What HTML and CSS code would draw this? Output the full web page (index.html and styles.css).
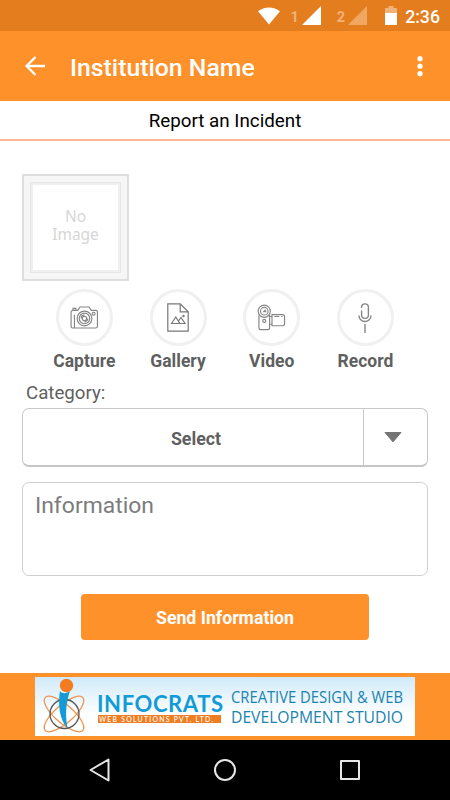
FILE: index.html
```html
<!DOCTYPE html>
<html lang="en">
<head>
<meta charset="utf-8">
<title>Report an Incident</title>
<link rel="stylesheet" href="styles.css">
</head>
<body>
<div class="screen">
  <div class="status">
    <svg class="wifi" width="22" height="18" viewBox="0 0 22 18"><path d="M0 4.2C6.2-.9 15.8-.9 22 4.2L11 17.6Z" fill="#fff"/></svg>
    <span class="sim sim1">1</span>
    <svg class="signal" width="19" height="19" viewBox="0 0 19 19"><path d="M19 0V19H0Z" fill="#fff"/></svg>
    <span class="sim sim2">2</span>
    <svg class="signal" width="19" height="19" viewBox="0 0 19 19"><path d="M19 0V19H0Z" fill="#efa762"/></svg>
    <svg class="battery" width="12" height="19" viewBox="0 0 12 19"><path d="M3.5 0h5v2H12v5H0V2h3.5Z" fill="#f1b27a"/><path d="M0 7H12V19H0Z" fill="#fff"/></svg>
    <span class="time">2:36</span>
  </div>
  <header class="appbar">
    <svg class="back" width="20" height="20" viewBox="0 0 20 20" fill="none" stroke="#fff" stroke-width="2.3"><path d="M20 10H2M10.5 1 1.6 10l8.9 9"/></svg>
    <h1>Institution Name</h1>
    <svg width="6" height="20" viewBox="0 0 6 20" fill="#fff"><circle cx="3" cy="2.7" r="2.6"/><circle cx="3" cy="10.2" r="2.6"/><circle cx="3" cy="17.7" r="2.6"/></svg>
  </header>
  <div class="subtitle"><span>Report an Incident</span></div>
  <main>
    <div class="photo"><div class="frame"><span>No</span><span>Image</span></div></div>
    <div class="actions">
      <div class="action"><div class="ring">
        <svg width="29" height="23" viewBox="0 0 30 24" fill="none" stroke="#858585" stroke-width="1.2"><path d="M3 4.5h5L10.3 1h9.4L22 4.5h4.5a2 2 0 0 1 2 2V21a2 2 0 0 1-2 2H3a2 2 0 0 1-2-2V6.500a2 2 0 0 1 2-2ZM3 4.500V2.500h3v2M4.500 9v14"/><circle cx="15" cy="13" r="7.700"/><circle cx="15" cy="13" r="5.500"/><circle cx="15" cy="13" r="2.300"/><path d="M11.500 13a3.500 3.500 0 0 1 3.500-3.500M18.500 13a3.500 3.500 0 0 1-3.500 3.500"/><circle cx="24.500" cy="8" r="1.500"/></svg>
      </div><span>Capture</span></div>
      <div class="action"><div class="ring">
        <svg width="22" height="29" viewBox="0 0 22 29" fill="none" stroke="#777" stroke-width="1.200"><path d="M.8.8h12.400l8 8v19.400H.8ZM13.200.8v8h8M4.500 20.500l4.300-6.500 4 6.500ZM11.500 18l2.500-3.500 4 6h-5"/><circle cx="16.500" cy="13" r=".6"/></svg>
      </div><span>Gallery</span></div>
      <div class="action"><div class="ring">
        <svg width="29" height="27" viewBox="0 0 30 27" fill="none" stroke="#858585" stroke-width="1.200"><circle cx="7.500" cy="7" r="6.300"/><circle cx="7.500" cy="7" r="3.900"/><path d="M2 11.500V24a2 2 0 0 0 2 2h7a2 2 0 0 0 2-2V11M9 5.500 7 7.500h2.500M13 12.500h2.500v8H13M15.500 10.500h11a2 2 0 0 1 2 2V20a2 2 0 0 1-2 2h-11ZM18 12.500h5M25 12.500h1.500"/><circle cx="7.500" cy="17" r="1.500"/></svg>
      </div><span>Video</span></div>
      <div class="action"><div class="ring">
        <svg width="14" height="30" viewBox="0 0 14 30" fill="none" stroke="#858585" stroke-width="1.400"><path d="M3.600 5V4.300a3.400 3.400 0 0 1 6.800 0V12a3.400 3.400 0 0 1-6.800 0V7.500M1 12.500a6 6 0 0 0 12 0M7 21v9"/></svg>
      </div><span>Record</span></div>
    </div>
    <div class="label">Category:</div>
    <div class="select">
      <div class="value">Select</div>
      <div class="arrow"><svg width="18" height="11" viewBox="0 0 18 11"><path d="M1 .5H17L9 9.900Z" fill="#757575" stroke="#757575" stroke-linejoin="round"/></svg></div>
    </div>
    <div class="info">Information</div>
    <button class="send">Send Information</button>
  </main>
  <footer class="ad">
    <div class="banner">
      <svg class="atom" width="44" height="55" viewBox="0 0 44 55" fill="none">
        <g stroke="#ed9350" stroke-width="1.300"><ellipse cx="21" cy="36" rx="25" ry="9" transform="rotate(41 21 36)"/><ellipse cx="21" cy="36" rx="25" ry="9" transform="rotate(-41 21 36)"/></g>
        <circle cx="21.500" cy="36" r="14.500" stroke="#555" stroke-width="1.300"/>
        <path d="M17 13c2 3 7 3 10-.5C24 22 21.500 34 24.500 50 17 43 14.500 27 17 13Z" fill="#139bd7"/>
        <circle cx="23.500" cy="7.500" r="6.700" fill="#f47c20"/>
      </svg>
      <svg class="brand" width="126" height="40" viewBox="0 0 126 40">
        <text class="name" x="0" y="19.500" textLength="126">INFOCRATS</text>
        <path d="M1 23H124V31H1Z" fill="#ef7d22"/>
        <text class="tag" x="2" y="29.500" textLength="114">WEB SOLUTIONS PVT. LTD.</text>
      </svg>
      <svg class="slogan" width="174" height="45" viewBox="0 0 174 45">
        <text x="0" y="14.700" textLength="172" lengthAdjust="spacingAndGlyphs">CREATIVE DESIGN &amp; WEB</text>
        <text x="0" y="35" textLength="172" lengthAdjust="spacingAndGlyphs">DEVELOPMENT STUDIO</text>
      </svg>
    </div>
  </footer>
  <nav class="nav">
    <svg width="22" height="24" viewBox="0 0 22 24"><path d="M19.500 1.500v21L1.500 12Z"/></svg>
    <svg width="22" height="22" viewBox="0 0 22 22"><circle cx="11" cy="11" r="10"/></svg>
    <svg width="20" height="20" viewBox="0 0 20 20"><path d="M1 1h18v18H1Z"/></svg>
  </nav>
</div>
</body>
</html>
```
FILE: styles.css
```css
* { box-sizing: border-box; }
body { margin: 0; background: #fff; font-family: Roboto, "Liberation Sans", sans-serif; }
svg { display: block; flex: none; overflow: visible; }
.screen { width: 450px; height: 800px; display: flex; flex-direction: column; overflow: hidden; }

.status { height: 31px; background: #e37d1e; display: flex; align-items: flex-start; padding: 6px 10px 0 258px; color: #fff; }
.wifi { margin-top: 1px; }
.sim { width: 10px; font-size: 14.5px; line-height: 17px; padding-top: 3px; font-weight: 700; color: #f1b27a; }
.sim1 { margin-left: 10.500px; margin-right: 1.500px; }
.sim2 { margin-left: 16px; margin-right: 1px; }
.battery { margin-left: 18px; }
.time { margin-left: 8.500px; font-size: 17.700px; line-height: 22px; font-weight: 500; white-space: nowrap; }

.appbar { height: 70px; background: #ff912b; display: flex; align-items: center; padding: 0 27px 0 25px; color: #fff; }
.appbar h1 { flex: 1; margin: 3px 0 0 25px; font-size: 24.800px; line-height: 30px; font-weight: 500; }

.subtitle { height: 40px; border-bottom: 2px solid #ffb892; text-align: center; color: #000; font-size: 18.800px; line-height: 40px; }

main { height: 532px; padding: 33px 22px 0; color: #5f5f5f; }
.photo { width: 107px; height: 107px; padding: 6px; border: 2px solid #dedede; background: #f6f6f6; }
.frame { height: 91px; border: 3px solid #f0f0f0; outline: 1px solid #e6e6e6; outline-offset: -1px; background: #fff; display: flex; flex-direction: column; align-items: center; justify-content: center; padding-bottom: 6px; font: 15.500px/18px "Noto Sans", sans-serif; color: #d6d6d6; }
.actions { display: grid; grid-template-columns: repeat(4, 93.700px); margin: 8px 0 0 15.500px; }
.action { display: flex; flex-direction: column; align-items: center; font-size: 17.500px; line-height: 22px; font-weight: 700; }
.ring { width: 57px; height: 57px; border: 3px solid #f0f0f0; border-radius: 50%; display: flex; align-items: center; justify-content: center; margin-bottom: 4px; }
.label { margin: 9px 0 0 4px; font-size: 18.700px; line-height: 24px; }
.select { height: 59px; margin-top: 3px; border: 1px solid #c9c9c9; border-bottom: 2px solid #c5c5c5; border-radius: 7px; display: flex; font-size: 17.800px; font-weight: 700; }
.value { width: 341px; border-right: 1px solid #c9c9c9; display: flex; align-items: center; justify-content: center; padding-left: 6px; padding-top: 2px; }
.arrow { display: flex; align-items: center; padding-left: 20px; }
.info { height: 94px; margin-top: 15px; border: 1px solid #cfcfcf; border-radius: 7px; padding: 8px 12px; font-size: 22.900px; line-height: 29px; color: #7c7c7c; }
.send { display: block; width: 288px; height: 46px; margin: 18px 0 0 59px; padding: 2px 0 0; border: 0; border-radius: 4px; background: #ff912b; color: #fff; font: 700 17.700px/22px Roboto, sans-serif; }

.ad { height: 67px; background: #ff912b; padding: 4px 35px; }
.banner { height: 59px; background: linear-gradient(#d0eafa, #fff 65%); display: flex; padding-left: 8px; }
.atom { margin-top: 1px; }
.brand { margin: 15px 0 0 10px; }
.name { font: 700 22px Lato, sans-serif; fill: #139bd7; }
.tag { font: 500 6.800px Lato, sans-serif; fill: #fff; }
.slogan { margin: 11px 0 0 8px; font: 500 16.500px "Open Sans", sans-serif; fill: #2083ad; }

.nav { height: 60px; background: #000; display: flex; align-items: center; justify-content: space-between; padding: 0 90px 0 89px; }
.nav svg { fill: none; stroke: #e6e6e6; stroke-width: 2; stroke-linejoin: round; }
.nav svg:nth-child(2) { margin-right: 2px; }
```
